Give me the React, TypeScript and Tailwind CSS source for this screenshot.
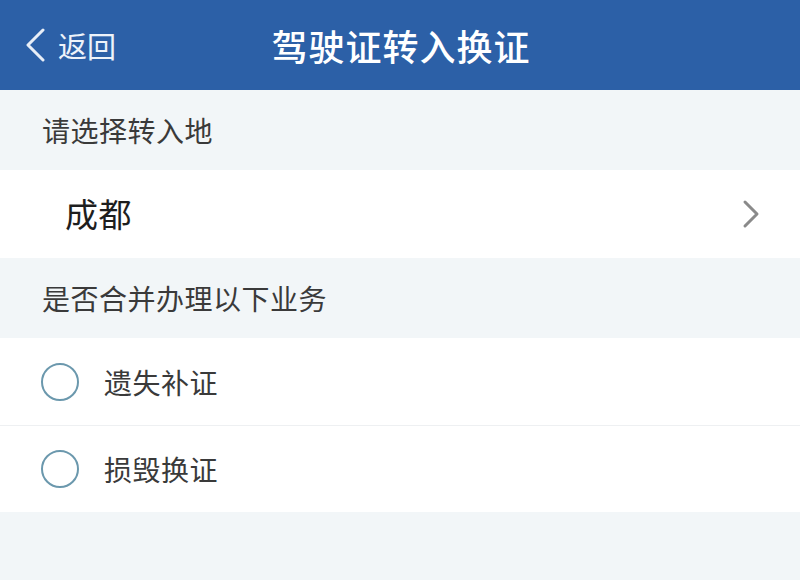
import React from "react";

const font = { fontFamily: '"Noto Sans CJK SC", "Noto Sans", sans-serif' };

function Radio() {
  return (
    <span className="block w-[38px] h-[38px] rounded-full border-[2.5px] border-[#6b98ad] bg-white" />
  );
}

export default function App() {
  return (
    <div className="w-[800px] h-[580px] bg-[#f2f6f8] flex flex-col overflow-hidden" style={font}>
      <div className="h-[90px] bg-[#2c60a7] flex items-center relative text-white">
        <div className="flex items-center pl-[25px] gap-[12px]">
          <svg width="21" height="34" viewBox="0 0 21 34" fill="none">
            <path d="M18 2 L3 17 L18 32" stroke="#e8eef7" strokeWidth="3" strokeLinecap="round" strokeLinejoin="round" />
          </svg>
          <span className="text-[29px] leading-none text-[#eef3fa]">返回</span>
        </div>
        <div className="absolute inset-0 flex items-center justify-center pointer-events-none">
          <span className="text-[36px] leading-none font-medium tracking-[1px] text-white pl-[2px]">驾驶证转入换证</span>
        </div>
      </div>
      <div className="h-[80px] flex items-center pl-[42px] text-[28px] tracking-[0.5px] text-[#3a3a3a]">请选择转入地</div>
      <div className="h-[88px] bg-white flex items-center justify-between pl-[65px] pr-[40px]">
        <span className="text-[33px] tracking-[0.5px] text-[#1e1e1e]">成都</span>
        <svg width="18" height="30" viewBox="0 0 18 30" fill="none">
          <path d="M3 3 L15 15 L3 27" stroke="#8a8a8a" strokeWidth="3" strokeLinecap="round" strokeLinejoin="round" />
        </svg>
      </div>
      <div className="h-[80px] flex items-center pl-[42px] text-[28px] tracking-[0.5px] text-[#3a3a3a]">是否合并办理以下业务</div>
      <div className="bg-white flex flex-col">
        <div className="h-[88px] flex items-center pl-[41px] gap-[25px] border-b border-[#eef0f2]">
          <Radio />
          <span className="text-[28px] tracking-[0.5px] text-[#3a3a3a]">遗失补证</span>
        </div>
        <div className="h-[86px] flex items-center pl-[41px] gap-[25px]">
          <Radio />
          <span className="text-[28px] tracking-[0.5px] text-[#3a3a3a]">损毁换证</span>
        </div>
      </div>
    </div>
  );
}
